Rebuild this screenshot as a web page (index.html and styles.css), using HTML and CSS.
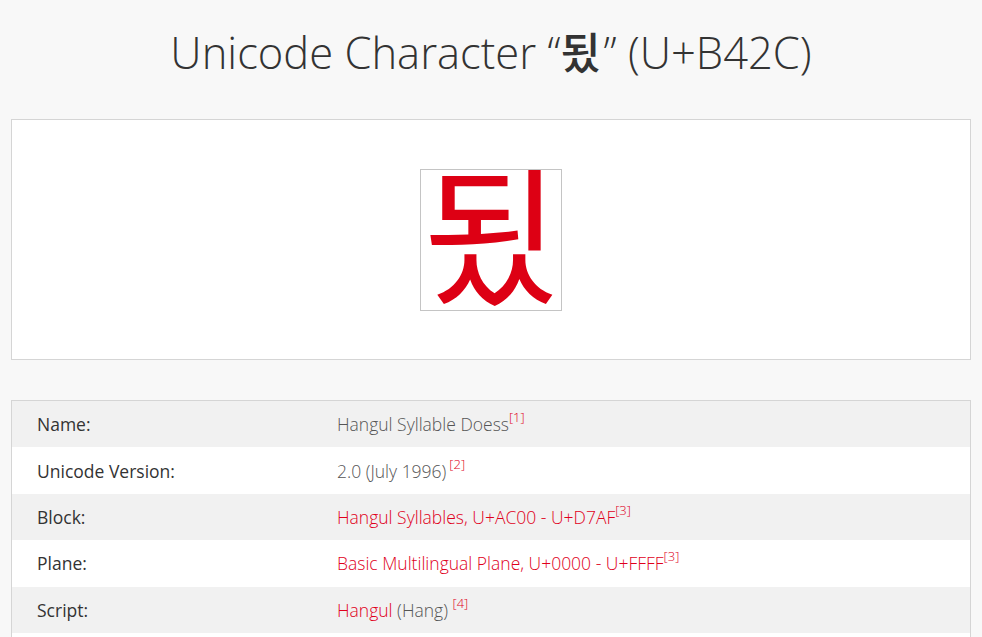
FILE: index.html
```html
<!DOCTYPE html>
<html lang="en">
<head>
<meta charset="utf-8">
<title>Unicode Character 됬 (U+B42C)</title>
<link rel="stylesheet" href="styles.css">
</head>
<body>
<div class="container">
  <h1 class="title">Unicode Character “<span class="title-char">됬</span>” (U+B42C)</h1>
  <div class="preview">
    <div class="glyph-box"><span class="glyph">됬</span></div>
  </div>
  <table class="info">
    <tr><td class="label">Name:</td><td class="value">Hangul Syllable Doess<sup class="ref">[1]</sup></td></tr>
    <tr><td class="label">Unicode Version:</td><td class="value">2.0 (July 1996)<sup class="ref sp">[2]</sup></td></tr>
    <tr><td class="label">Block:</td><td class="value"><a class="link">Hangul Syllables, U+AC00 - U+D7AF</a><sup class="ref">[3]</sup></td></tr>
    <tr><td class="label">Plane:</td><td class="value"><a class="link">Basic Multilingual Plane, U+0000 - U+FFFF</a><sup class="ref">[3]</sup></td></tr>
    <tr><td class="label">Script:</td><td class="value"><a class="link">Hangul</a> (Hang) <sup class="ref">[4]</sup></td></tr>
    <tr><td class="label">Category:</td><td class="value">Other Letter (Lo)</td></tr>
  </table>
</div>
</body>
</html>
```
FILE: styles.css
```css
html, body {
  margin: 0;
  padding: 0;
  background: #f8f8f8;
}
body {
  font-family: "Open Sans", "Noto Sans", sans-serif;
  color: #333;
}
.container {
  width: 960px;
  margin: 0 auto;
}
.title {
  margin: 0;
  padding: 20px 0 0;
  height: 97px;
  box-sizing: border-box;
  text-align: center;
  font-weight: 300;
  font-size: 43.5px;
  line-height: 62px;
  color: #333;
}
.title-char {
  font-family: "Noto Sans CJK KR", sans-serif;
  font-weight: 500;
  margin-right: 3px;
}
.preview {
  margin-top: 22px;
  height: 241px;
  box-sizing: border-box;
  background: #fff;
  border: 1px solid #d5d5d5;
  display: flex;
  justify-content: center;
  padding-top: 49px;
}
.glyph-box {
  width: 142px;
  height: 142px;
  box-sizing: border-box;
  border: 1px solid #c4c4c4;
  display: flex;
  align-items: flex-start;
  justify-content: center;
  overflow: hidden;
}
.glyph {
  font-family: "Noto Sans CJK KR", sans-serif;
  font-size: 150px;
  line-height: 1;
  margin-top: -17px;
  color: #dd0014;
}
.info {
  margin-top: 40px;
  width: 960px;
  border-collapse: collapse;
  border: 1px solid #d5d5d5;
  font-size: 17.5px;
}
.info tr {
  background: #fff;
}
.info tr:nth-child(odd) {
  background: #f1f1f1;
}
.info td {
  height: 46.4px;
  padding: 0;
  vertical-align: middle;
}
.label {
  width: 300px;
  padding-left: 25px !important;
  color: #333;
}
.value {
  color: #555;
  font-weight: 300;
}
.link {
  color: #e0001b;
  text-decoration: none;
}
.ref {
  color: #e0001b;
  font-size: 13px;
  vertical-align: 9px;
  line-height: 0;
}
.sp {
  margin-left: 3px;
}
```
